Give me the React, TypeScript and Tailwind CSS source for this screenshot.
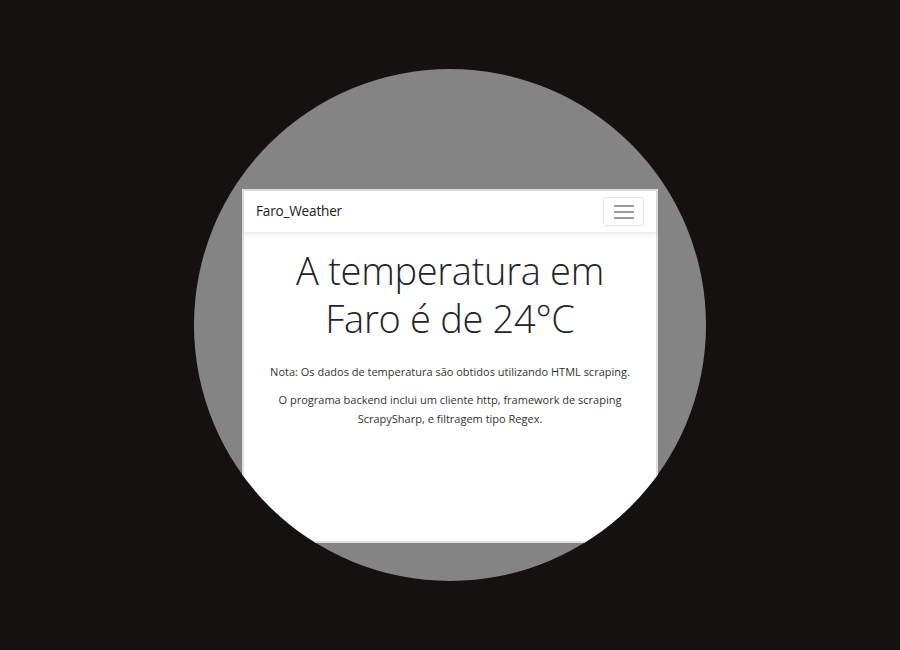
import React from "react";

export default function App() {
  return (
    <div className="w-[900px] h-[650px] bg-[#141110] flex items-center justify-center" style={{ fontFamily: '"Open Sans", "Noto Sans", sans-serif' }}>
      <div className="w-[512px] h-[512px] rounded-full bg-[#848484] overflow-hidden pt-[120px] pl-[48px]">
        <div className="w-[416px] h-[354px] bg-white border-2 border-[#dedede] flex flex-col">
          <div className="h-[42px] shrink-0 flex items-center justify-between pl-[12px] pr-[12px] shadow-[0_2px_6px_rgba(0,0,0,0.08)] border-b border-[#eeeeee]">
            <span className="text-[13.6px] text-[#222] tracking-[-0.2px]">Faro_Weather</span>
            <div className="w-[41px] h-[29px] rounded-[3px] border border-[#e6e6e6] flex flex-col items-center justify-center gap-[4px]">
              <div className="w-[20px] h-[2px] bg-[#9a9a9a]" />
              <div className="w-[20px] h-[2px] bg-[#9a9a9a]" />
              <div className="w-[20px] h-[2px] bg-[#9a9a9a]" />
            </div>
          </div>
          <div className="flex flex-col items-center text-center pt-[13px]">
            <h1 className="text-[38px] leading-[48px] font-light text-[#212529] tracking-[-0.3px]">
              A temperatura em
              <br />
              Faro é de 24°C
            </h1>
            <p className="mt-[20px] text-[11px] leading-[19px] text-[#333]">
              Nota: Os dados de temperatura são obtidos utilizando HTML scraping.
            </p>
            <p className="mt-[9px] text-[11px] leading-[19px] text-[#333]">
              O programa backend inclui um cliente http, framework de scraping
              <br />
              ScrapySharp, e filtragem tipo Regex.
            </p>
          </div>
        </div>
      </div>
    </div>
  );
}
